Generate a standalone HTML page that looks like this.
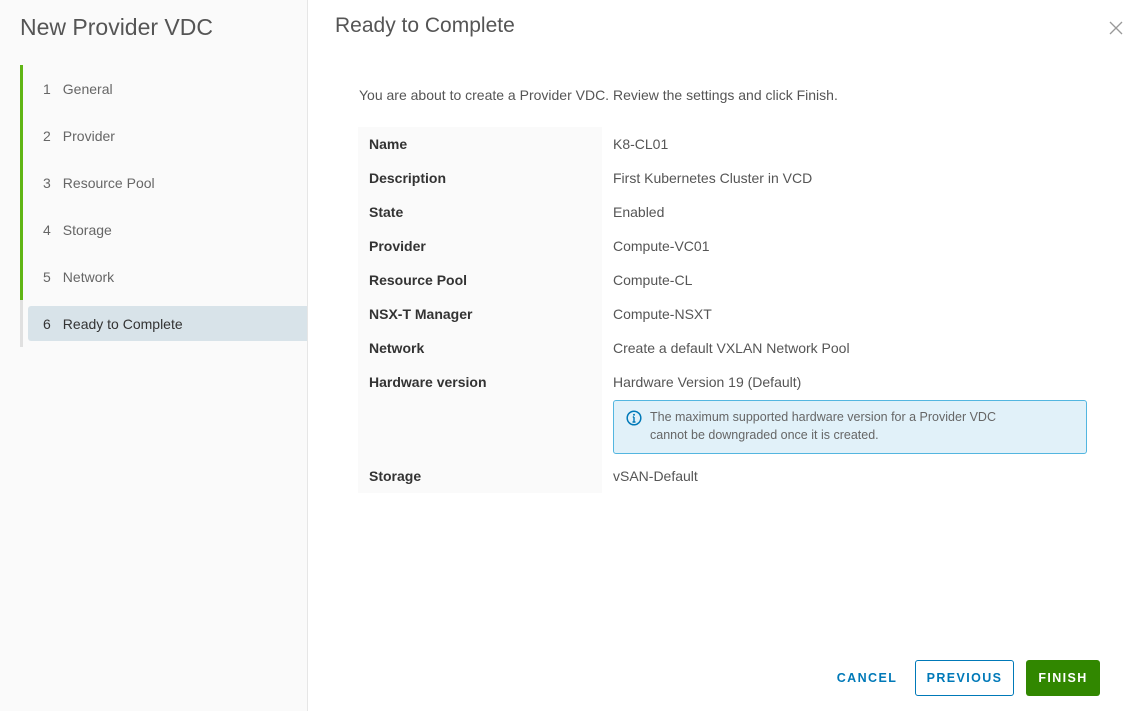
<!DOCTYPE html>
<html><head><style>
*{margin:0;padding:0;box-sizing:border-box}
body{width:1139px;height:711px;background:#fff;font-family:"Liberation Sans",sans-serif;color:#333;position:relative;overflow:hidden}
.side{position:absolute;left:0;top:0;width:308px;height:711px;background:#fafafa;border-right:1px solid #e6e6e6}
.side h1{position:absolute;left:20px;top:14px;font-size:23px;font-weight:normal;color:#555}
.bar{position:absolute;left:20px;width:3px}
.step{position:absolute;left:43px;font-size:14px;color:#666;height:36px;line-height:36px}
.step b{font-weight:normal;margin-right:12px}
.act{position:absolute;left:28px;top:306px;width:279px;height:35px;background:#d8e3e9;border-radius:3px 0 0 3px}
h2{position:absolute;left:335px;top:14px;font-size:21px;font-weight:normal;color:#555}
.x{position:absolute;left:1108px;top:20px}
.intro{position:absolute;left:359px;top:87px;font-size:14px;color:#555}
.lab{position:absolute;left:358px;top:127px;width:244px;height:366px;background:#fafafa}
.r{position:absolute;font-size:14px;line-height:18px}
.l{left:369px;font-weight:bold;color:#333}
.v{left:613px;color:#555}
.info{position:absolute;left:613px;top:400px;width:474px;height:54px;background:#e1f1f9;border:1px solid #53b6e0;border-radius:3px;font-size:12.5px;color:#666;line-height:18px;padding:7px 0 0 36px}
.info svg{position:absolute;left:12px;top:9px}
.btn{position:absolute;top:660px;height:36px;line-height:36px;font-size:12.5px;font-weight:bold;letter-spacing:1.4px;text-align:center;border-radius:3px}
</style></head><body>
<div class="side">
<h1>New Provider VDC</h1>
<div class="bar" style="top:65px;height:235px;background:#60b515"></div>
<div class="bar" style="top:300px;height:47px;background:#e0e0e0"></div>
<div class="act"></div>
<div class="step" style="top:71px"><b>1</b>General</div>
<div class="step" style="top:118px"><b>2</b>Provider</div>
<div class="step" style="top:165px"><b>3</b>Resource Pool</div>
<div class="step" style="top:212px"><b>4</b>Storage</div>
<div class="step" style="top:259px"><b>5</b>Network</div>
<div class="step" style="top:306px;color:#333"><b>6</b>Ready to Complete</div>
</div>
<h2>Ready to Complete</h2>
<svg class="x" width="16" height="16" viewBox="0 0 16 16"><path d="M2 2L14 14M14 2L2 14" stroke="#999" stroke-width="1.3"/></svg>
<div class="intro">You are about to create a Provider VDC. Review the settings and click Finish.</div>
<div class="lab"></div>
<div class="r l" style="top:135px">Name</div><div class="r v" style="top:135px">K8-CL01</div>
<div class="r l" style="top:169px">Description</div><div class="r v" style="top:169px">First Kubernetes Cluster in VCD</div>
<div class="r l" style="top:203px">State</div><div class="r v" style="top:203px">Enabled</div>
<div class="r l" style="top:237px">Provider</div><div class="r v" style="top:237px">Compute-VC01</div>
<div class="r l" style="top:271px">Resource Pool</div><div class="r v" style="top:271px">Compute-CL</div>
<div class="r l" style="top:305px">NSX-T Manager</div><div class="r v" style="top:305px">Compute-NSXT</div>
<div class="r l" style="top:339px">Network</div><div class="r v" style="top:339px">Create a default VXLAN Network Pool</div>
<div class="r l" style="top:373px">Hardware version</div><div class="r v" style="top:373px">Hardware Version 19 (Default)</div>
<div class="info"><svg width="16" height="16" viewBox="0 0 16 16"><circle cx="8" cy="8" r="6.8" fill="none" stroke="#0079b8" stroke-width="1.5"/><circle cx="8" cy="4.8" r="1" fill="#0079b8"/><path d="M8 7v5M6.5 12h3M6.8 7H8" stroke="#0079b8" stroke-width="1.4"/></svg>The maximum supported hardware version for a Provider VDC<br>cannot be downgraded once it is created.</div>
<div class="r l" style="top:467px">Storage</div><div class="r v" style="top:467px">vSAN-Default</div>
<div class="btn" style="left:830px;width:74px;color:#0079b8">CANCEL</div>
<div class="btn" style="left:915px;width:99px;line-height:34px;color:#0079b8;border:1px solid #0079b8">PREVIOUS</div>
<div class="btn" style="left:1026px;width:74px;background:#318700;color:#fff">FINISH</div>
</body></html>
